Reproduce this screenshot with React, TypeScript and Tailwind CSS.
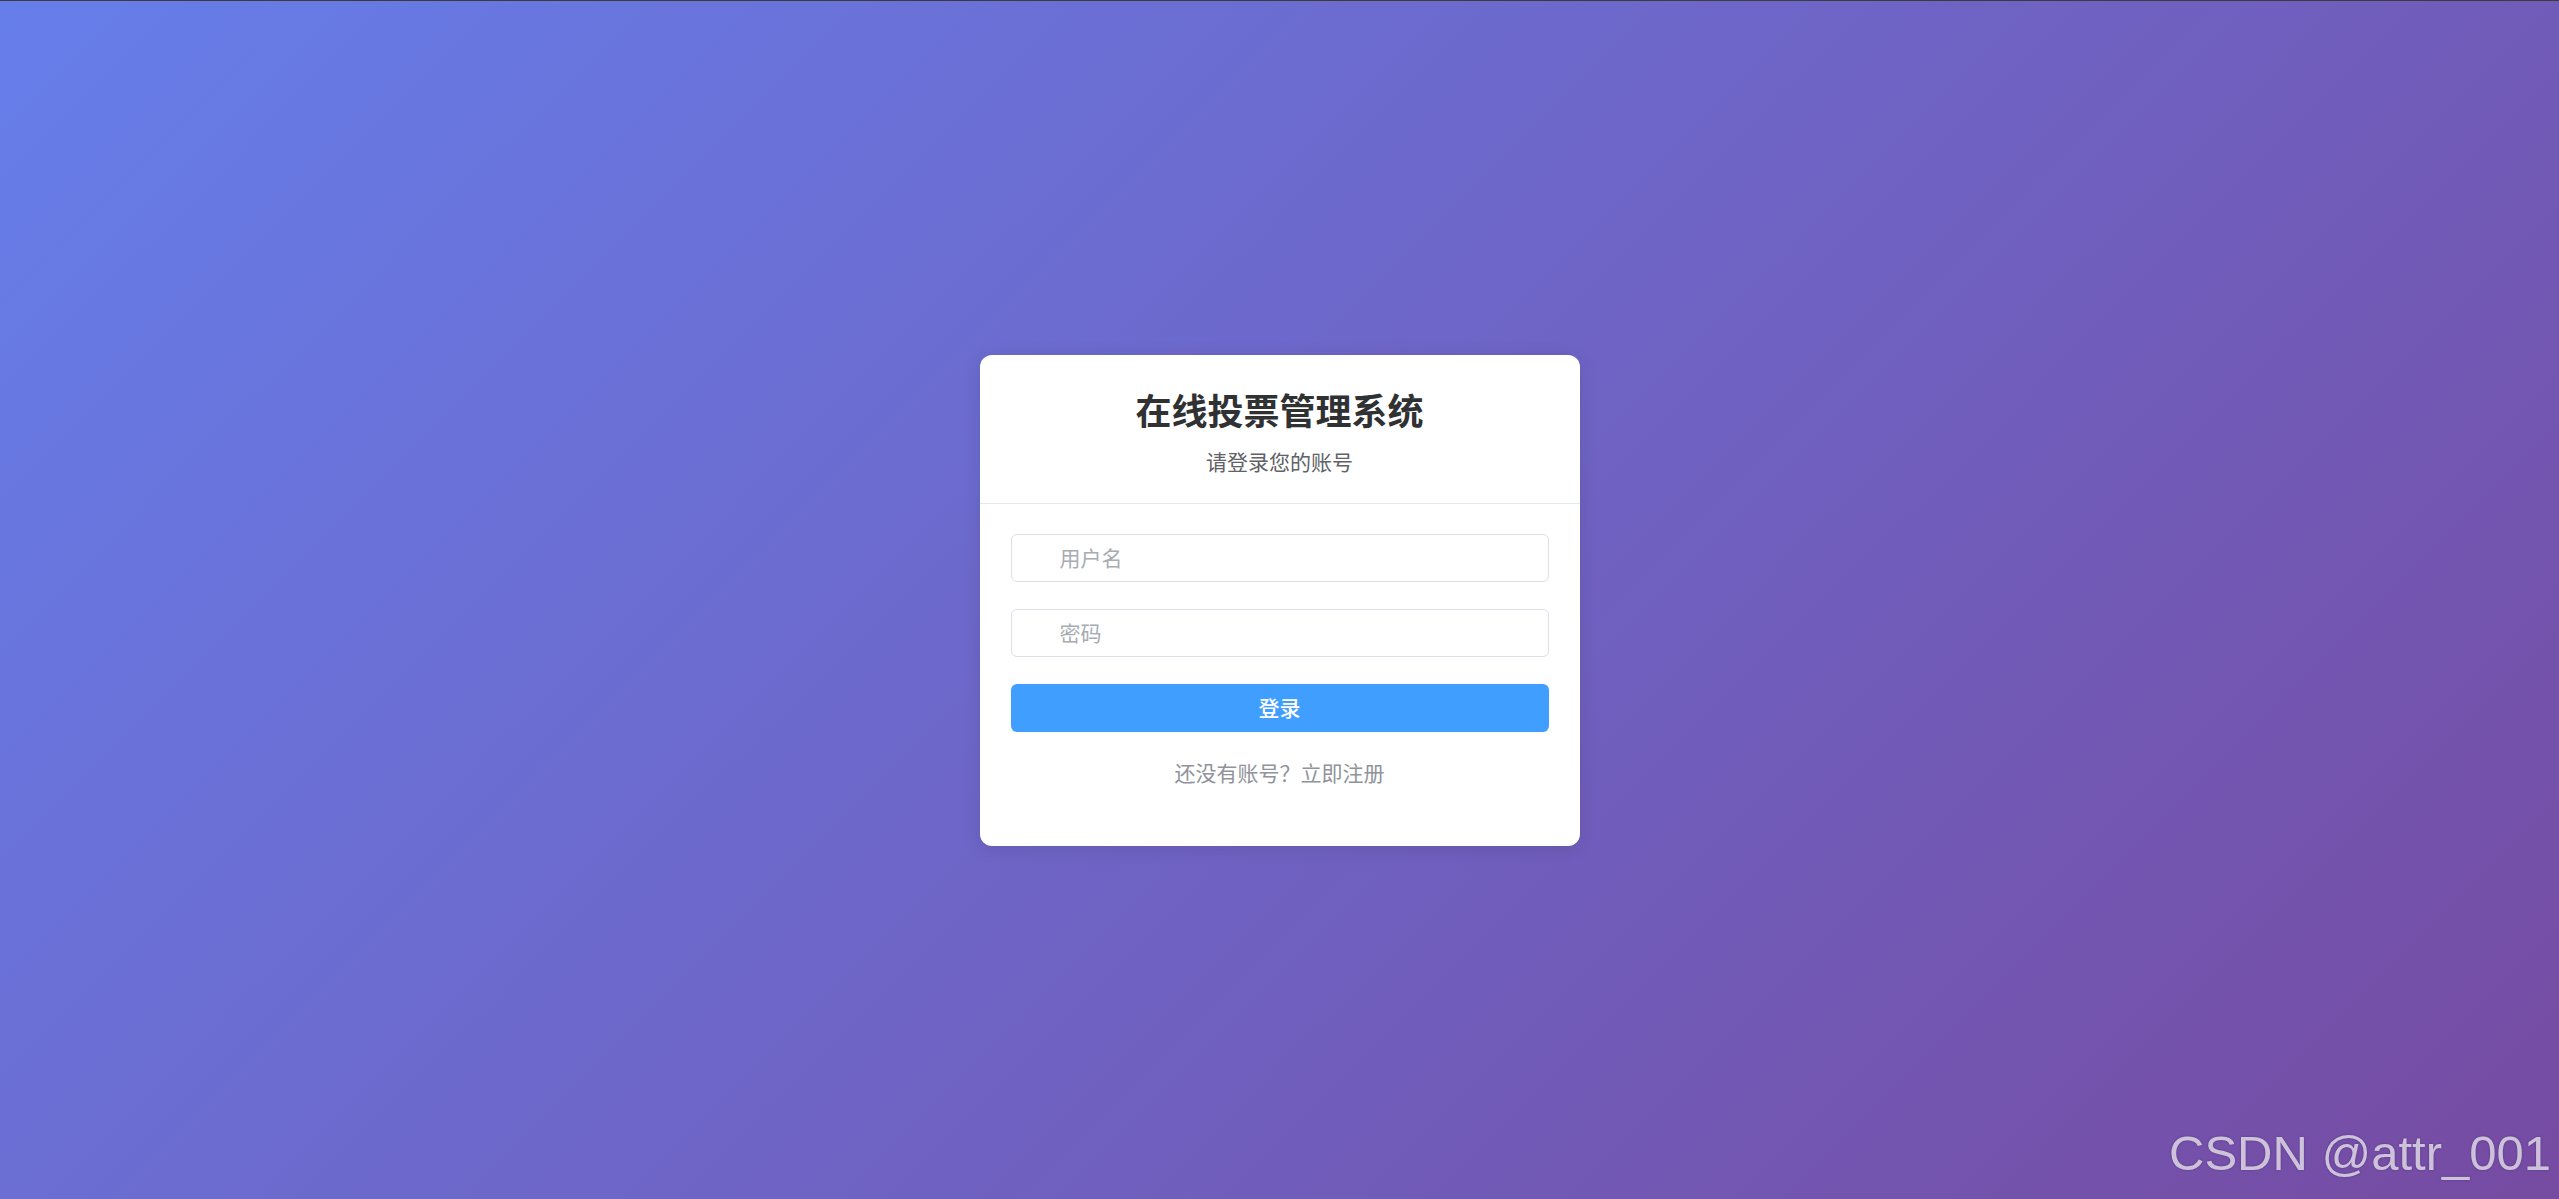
import React from "react";

const cjk = { fontFamily: '"Noto Sans CJK SC", "Noto Sans", sans-serif' };

export default function App() {
  return (
    <div
      className="relative h-screen w-full overflow-hidden border-t border-[#3c3c3c] bg-[linear-gradient(135deg,#667eea_0%,#764ba2_100%)] flex items-center justify-center"
      style={cjk}
    >
      <div className="w-[600px] rounded-[12px] bg-white shadow-[0_3px_18px_rgba(0,0,0,0.1)]">
        <div className="border-b border-[#e4e7ed] px-[30px] pt-[27px] pb-[26px] text-center">
          <h1 className="text-[36px] leading-[54px] font-bold text-[#303133] mb-[9px]">
            在线投票管理系统
          </h1>
          <p className="text-[21px] leading-[32px] text-[#606266]">请登录您的账号</p>
        </div>
        <div className="px-[31px] pt-[30px] pb-[58px]">
          <div className="mb-[27px]">
            <div className="flex h-[48px] items-center rounded-[6px] border border-[#dcdfe6] bg-white pl-[48px] pr-[15px]">
              <input
                className="w-full bg-transparent text-[21px] text-[#606266] outline-none placeholder:text-[#a8abb2]"
                placeholder="用户名"
                style={cjk}
              />
            </div>
          </div>
          <div className="mb-[27px]">
            <div className="flex h-[48px] items-center rounded-[6px] border border-[#dcdfe6] bg-white pl-[48px] pr-[15px]">
              <input
                type="password"
                className="w-full bg-transparent text-[21px] text-[#606266] outline-none placeholder:text-[#a8abb2]"
                placeholder="密码"
                style={cjk}
              />
            </div>
          </div>
          <button
            className="flex h-[48px] w-full items-center justify-center rounded-[6px] bg-[#409eff] text-[21px] font-medium text-white"
            style={cjk}
          >
            登录
          </button>
          <div className="mt-[24px] text-center text-[21px] leading-[32px] text-[#909399]">
            还没有账号？<span className="text-[#909399]">立即注册</span>
          </div>
        </div>
      </div>
      <div
        className="absolute right-[8px] bottom-[21px] text-[49px] leading-none text-white/70 [text-shadow:0_0_2px_rgba(60,30,100,0.6)]"
        style={{ fontFamily: '"Liberation Sans", Arial, sans-serif' }}
      >
        CSDN @attr_001
      </div>
    </div>
  );
}
